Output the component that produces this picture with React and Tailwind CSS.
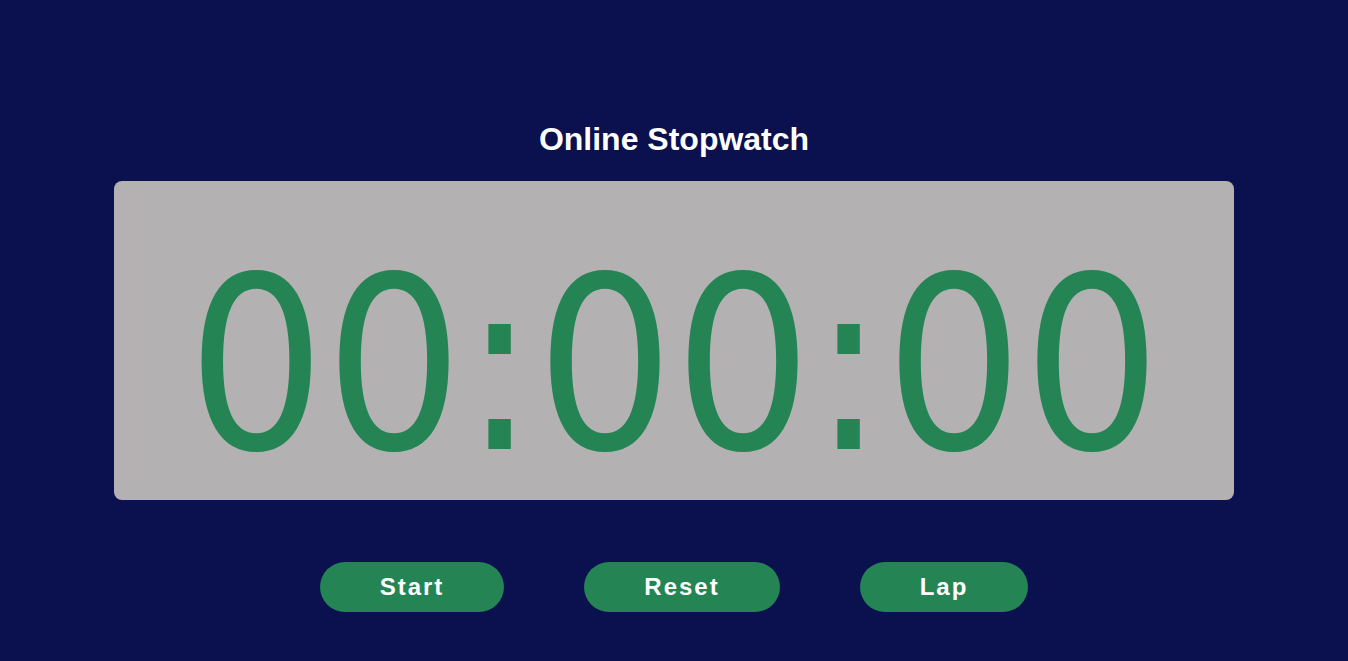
import { useState } from 'react'

export default function App() {
  const [time] = useState('00:00:00')

  return (
    <div className="min-h-screen w-full bg-[#0b104f] flex flex-col items-center" style={{ minHeight: 661 }}>
      <h1 className="mt-[120px] text-[32px] leading-[38px] font-bold text-white font-['Liberation_Sans',Arial,sans-serif]">
        Online Stopwatch
      </h1>

      {/* display */}
      <div className="mt-[23px] w-[1120px] h-[319px] rounded-lg bg-[#b3b1b2] flex items-center justify-center">
        <span className="mt-[50px] text-[241px] leading-none tracking-[0px] text-[#248454] font-['DejaVu_Sans_Condensed','DejaVu_Sans',sans-serif]">
          {time}
        </span>
      </div>

      {/* controls */}
      <div className="mt-[62px] flex gap-[80px]">
        {['Start', 'Reset', 'Lap'].map((label) => (
          <button
            key={label}
            className="h-[50px] px-[60px] rounded-full bg-[#248454] text-white text-[24px] font-bold tracking-[2px] font-['Liberation_Sans',Arial,sans-serif]"
          >
            {label}
          </button>
        ))}
      </div>
    </div>
  )
}
